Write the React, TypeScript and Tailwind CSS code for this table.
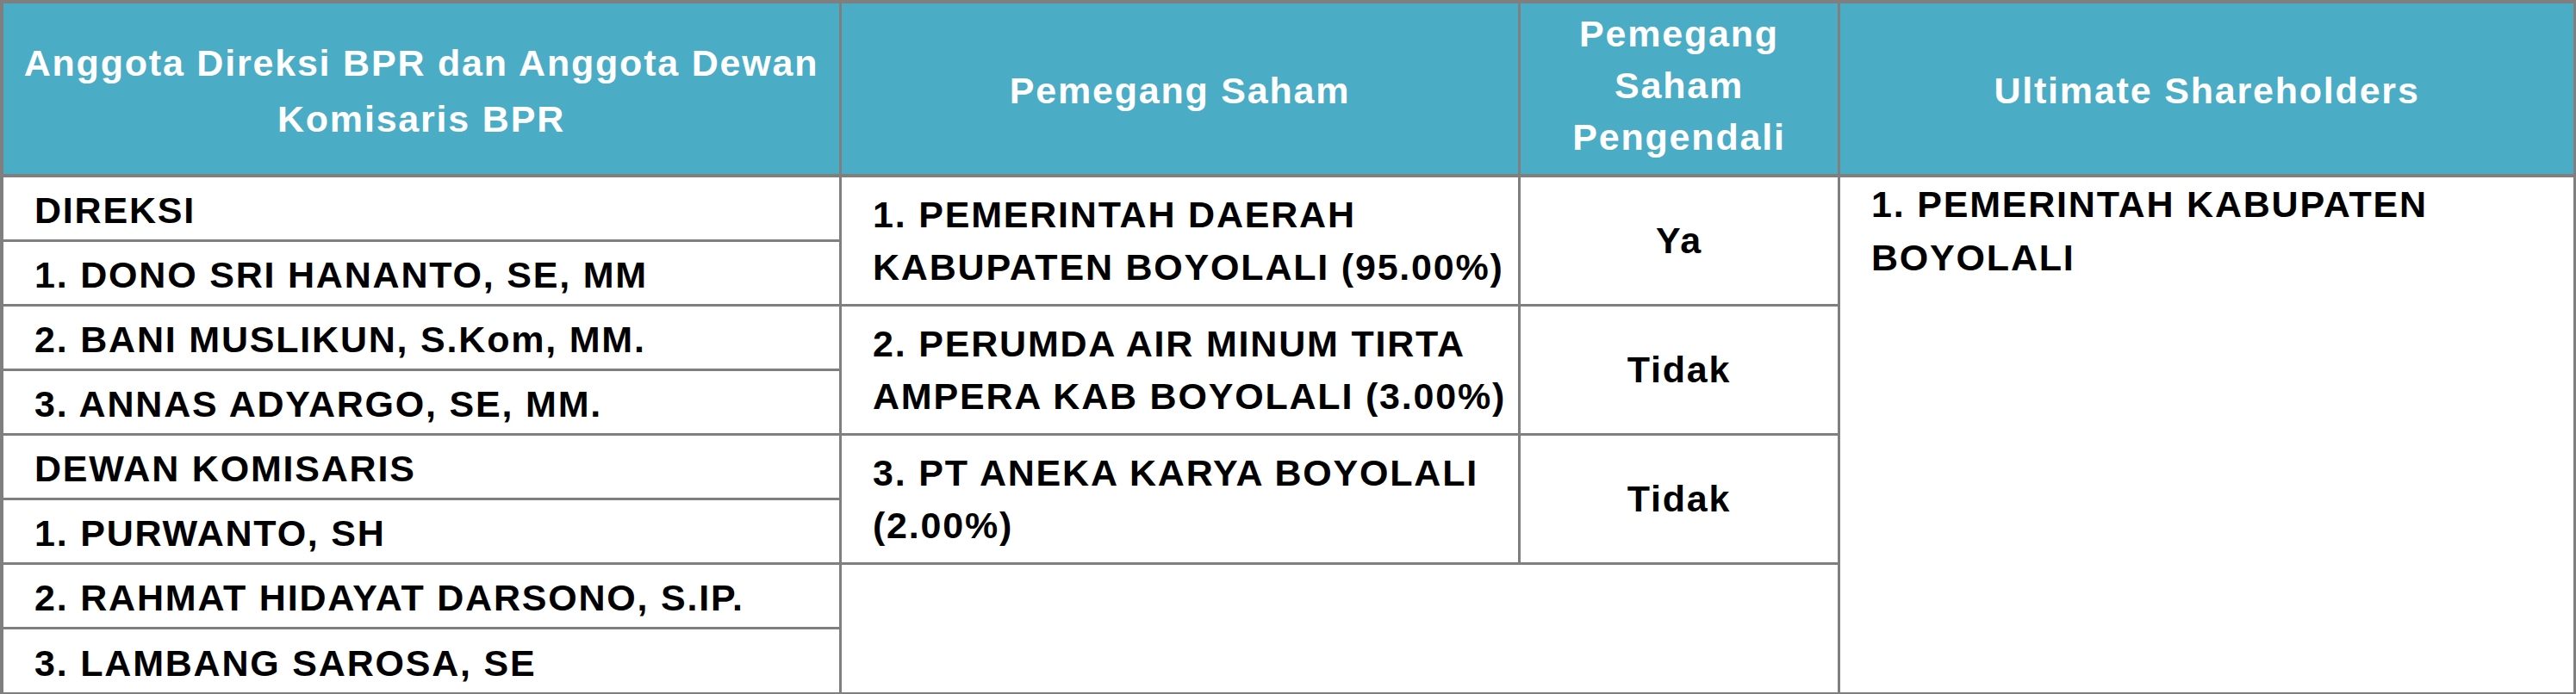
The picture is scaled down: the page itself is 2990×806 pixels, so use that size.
const LINE = 'border-[#7f7f7f]'

const pengurus = [
  'DIREKSI',
  '1. DONO SRI HANANTO, SE, MM',
  '2. BANI MUSLIKUN, S.Kom, MM.',
  '3. ANNAS ADYARGO, SE, MM.',
  'DEWAN KOMISARIS',
  '1. PURWANTO, SH',
  '2. RAHMAT HIDAYAT DARSONO, S.IP.',
  '3. LAMBANG SAROSA, SE',
]

const pemegang = [
  { lines: ['1. PEMERINTAH DAERAH', 'KABUPATEN BOYOLALI (95.00%)'], pengendali: 'Ya' },
  { lines: ['2. PERUMDA AIR MINUM TIRTA', 'AMPERA KAB BOYOLALI (3.00%)'], pengendali: 'Tidak' },
  { lines: ['3. PT ANEKA KARYA BOYOLALI', '(2.00%)'], pengendali: 'Tidak' },
]

const rowStart = ['row-start-2', 'row-start-3', 'row-start-4', 'row-start-5', 'row-start-6', 'row-start-7', 'row-start-8', 'row-start-9']
const pairStart = ['row-start-2', 'row-start-4', 'row-start-6']

export default function App() {
  return (
    <div className="w-[2990px] bg-white [font-family:'Liberation_Sans',Arial,sans-serif] text-[43px] tracking-[1.8px] font-bold text-black">
      <div className="grid grid-cols-[977px_788px_371px_854px] grid-rows-[206px_repeat(8,75px)]">
        {/* header */}
        <div className={`col-start-1 row-start-1 flex items-center justify-center text-center leading-[65px] pt-[6px] bg-[#4bacc6] text-white border-t-4 border-b-4 border-l-4 border-r-[3px] ${LINE}`}>
          <div>
            <div>Anggota Direksi BPR dan Anggota Dewan</div>
            <div>Komisaris BPR</div>
          </div>
        </div>
        <div className={`col-start-2 row-start-1 flex items-center justify-center text-center pt-[4px] bg-[#4bacc6] text-white border-t-4 border-b-4 border-r-[3px] ${LINE}`}>
          Pemegang Saham
        </div>
        <div className={`col-start-3 row-start-1 flex items-center justify-center text-center leading-[60px] pb-[9px] bg-[#4bacc6] text-white border-t-4 border-b-4 border-r-[3px] ${LINE}`}>
          <div>
            <div>Pemegang</div>
            <div>Saham</div>
            <div>Pengendali</div>
          </div>
        </div>
        <div className={`col-start-4 row-start-1 flex items-center justify-center text-center pt-[4px] bg-[#4bacc6] text-white border-t-4 border-b-4 border-r-[3px] ${LINE}`}>
          Ultimate Shareholders
        </div>

        {/* anggota direksi & komisaris */}
        {pengurus.map((nama, i) => (
          <div
            key={nama}
            className={`col-start-1 ${rowStart[i]} flex items-center pl-[36px] pt-[5px] leading-none border-l-4 border-r-[3px] ${i === 7 ? 'border-b-2' : 'border-b-[3px]'} ${LINE}`}
          >
            {nama}
          </div>
        ))}

        {/* pemegang saham */}
        {pemegang.map((p, i) => (
          <div key={p.lines[0]} className="contents">
            <div className={`col-start-2 ${pairStart[i]} row-span-2 flex items-center pl-[36px] leading-[61px] border-r-[3px] border-b-[3px] ${LINE}`}>
              <div>
                {p.lines.map((l) => (
                  <div key={l}>{l}</div>
                ))}
              </div>
            </div>
            <div className={`col-start-3 ${pairStart[i]} row-span-2 flex items-center justify-center border-r-[3px] border-b-[3px] ${LINE}`}>
              {p.pengendali}
            </div>
          </div>
        ))}
        <div className={`col-start-2 col-span-2 row-start-8 row-span-2 border-r-[3px] border-b-2 ${LINE}`} />

        {/* ultimate shareholders */}
        <div className={`col-start-4 row-start-2 row-span-8 pl-[36px] leading-[62px] border-r-[3px] border-b-2 ${LINE}`}>
          <div>1. PEMERINTAH KABUPATEN</div>
          <div>BOYOLALI</div>
        </div>
      </div>
    </div>
  )
}
